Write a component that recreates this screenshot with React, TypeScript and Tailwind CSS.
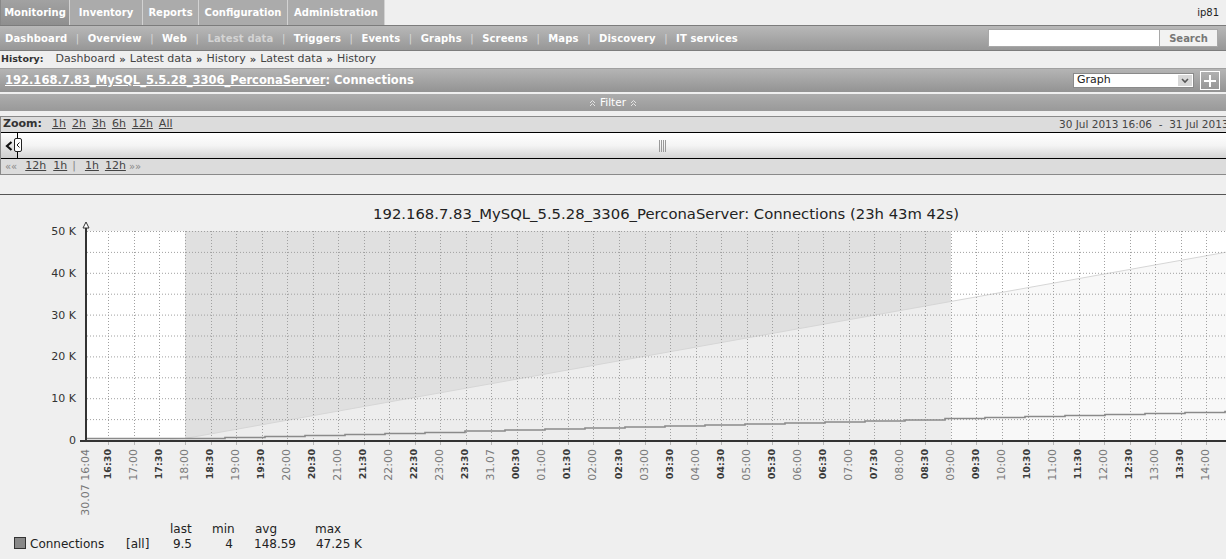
import React from "react";

const tabs = [
  { label: "Monitoring", w: "w-[70px]", active: true },
  { label: "Inventory", w: "w-[73px]" },
  { label: "Reports", w: "w-[56px]" },
  { label: "Configuration", w: "w-[89px]" },
  { label: "Administration", w: "w-[97px]" },
];

const navItems = [
  "Dashboard",
  "Overview",
  "Web",
  "Latest data",
  "Triggers",
  "Events",
  "Graphs",
  "Screens",
  "Maps",
  "Discovery",
  "IT services",
];

const crumbs = ["Dashboard", "Latest data", "History", "Latest data", "History"];

// graph geometry (page coordinates)
const X0 = 86.3;
const PPM = 0.851;
const Y_TOP = 231;
const Y_ZERO = 440;
const STEP = (Y_ZERO - Y_TOP) / 10;

const pad = (n: number) => (n < 10 ? "0" + n : "" + n);

const ticks: { x: number; label: string; major: boolean }[] = [];
for (let m = 26; X0 + m * PPM < 1240; m += 30) {
  const total = 16 * 60 + 4 + m;
  const h = Math.floor(total / 60) % 24;
  const mm = total % 60;
  ticks.push({
    x: X0 + m * PPM,
    label: h === 0 && mm === 0 ? "31.07" : `${pad(h)}:${pad(mm)}`,
    major: mm === 0,
  });
}

function avgPath() {
  let d = `M87 438.5 H185`;
  let y = 438.5;
  for (let x = 185; x < 1300; x += 40) {
    const ny = Math.round((438.5 - (x - 185) * 0.026) * 2) / 2;
    if (ny !== y) {
      d += ` V${ny}`;
      y = ny;
    }
    d += ` H${x + 40}`;
  }
  return d;
}

function DoubleUp() {
  return (
    <svg width="7" height="8" viewBox="0 0 7 8" className="inline-block">
      <path d="M1 4 L3.5 1.5 L6 4 M1 7 L3.5 4.5 L6 7" fill="none" stroke="#e4e4e4" strokeWidth="1" />
    </svg>
  );
}

function Graph() {
  return (
    <svg width="1226" height="364" className="block" style={{ fontFamily: "'DejaVu Sans', sans-serif" }}>
      <g transform="translate(0 -195)">
        <text x="666" y="219" textAnchor="middle" fontSize="14.8" fill="#222">
          192.168.7.83_MySQL_5.5.28_3306_PerconaServer: Connections (23h 43m 42s)
        </text>

        {/* plot background and non-working time */}
        <rect x="87" y={Y_TOP} width="1220" height={Y_ZERO - Y_TOP} fill="#ffffff" />
        <rect x="185" y={Y_TOP} width="766" height={Y_ZERO - Y_TOP} fill="#e0e0e0" />

        {/* max area */}
        <polygon points="87,439 170,439 185,438.5 1300,239 1300,440 87,440" fill="#f4f4f4" fillOpacity="0.65" />
        <polyline points="170,439 185,438.5 1300,239" fill="none" stroke="#d6d6d6" strokeWidth="1" />

        {/* grid */}
        {Array.from({ length: 10 }).map((_, k) => (
          <line
            key={"h" + k}
            x1="87"
            x2="1226"
            y1={Y_TOP + k * STEP + 0.5}
            y2={Y_TOP + k * STEP + 0.5}
            stroke="#a0a0a0"
            strokeWidth="1"
            strokeDasharray="1 2"
          />
        ))}
        {ticks.map((t) => (
          <line
            key={"v" + t.x}
            x1={Math.round(t.x) + 0.5}
            x2={Math.round(t.x) + 0.5}
            y1={Y_TOP}
            y2={Y_ZERO}
            stroke="#a0a0a0"
            strokeWidth="1"
            strokeDasharray="1 2"
          />
        ))}

        {/* avg line */}
        <path d={avgPath()} fill="none" stroke="#8a8a8a" strokeWidth="1.6" />

        {/* axes */}
        <line x1="86" x2="86" y1="224" y2="441" stroke="#333" strokeWidth="2" />
        <polygon points="83,228 89,228 86,222" fill="#fff" stroke="#333" strokeWidth="1" />
        <line x1="80" x2="1226" y1="441" y2="441" stroke="#333" strokeWidth="2" />
        {ticks.map((t) => (
          <line
            key={"t" + t.x}
            x1={Math.round(t.x) + 0.5}
            x2={Math.round(t.x) + 0.5}
            y1="442"
            y2="445"
            stroke="#b8b8b8"
            strokeWidth="1"
          />
        ))}

        {/* y labels */}
        {[0, 2, 4, 6, 8, 10].map((k) => (
          <text
            key={"y" + k}
            x="76"
            y={Y_TOP + k * STEP + 4}
            textAnchor="end"
            fontSize="11"
            fill="#333"
          >
            {k === 10 ? "0" : `${50 - k * 5} K`}
          </text>
        ))}

        {/* x labels */}
        <text
          transform={`translate(${X0} 449) rotate(-90)`}
          textAnchor="end"
          dominantBaseline="middle"
          fontSize="11"
          fill="#777"
        >
          30.07 16:04
        </text>
        {ticks.map((t) => (
          <text
            key={"l" + t.x}
            transform={`translate(${t.x} 449) rotate(-90)`}
            textAnchor="end"
            dominantBaseline="middle"
            fontSize={t.major ? 11 : 9.5}
            fontWeight={t.major ? 400 : 700}
            fill={t.major ? "#7a7a7a" : "#3a3a3a"}
          >
            {t.label}
          </text>
        ))}

        {/* legend */}
        <g fontSize="12" fill="#222">
          <text x="170" y="533">last</text>
          <text x="212" y="533">min</text>
          <text x="255" y="533">avg</text>
          <text x="315" y="533">max</text>
          <rect x="14.5" y="537.5" width="11" height="11" fill="#888" stroke="#333" />
          <text x="30" y="548">Connections</text>
          <text x="126" y="548">[all]</text>
          <text x="192" y="548" textAnchor="end">9.5</text>
          <text x="233" y="548" textAnchor="end">4</text>
          <text x="296" y="548" textAnchor="end">148.59</text>
          <text x="362" y="548" textAnchor="end">47.25 K</text>
        </g>
      </g>
    </svg>
  );
}

export default function App() {
  return (
    <div className="w-[1226px] h-[559px] overflow-hidden bg-[#efefef] text-[#333] font-['DejaVu_Sans',sans-serif]">
      {/* top tabs */}
      <div className="flex h-[26px] border-b border-[#7c7c7c] bg-[#efefef]">
        {tabs.map((t) => (
          <div
            key={t.label}
            className={`${t.w} flex items-center justify-center border-r border-[#d2d2d2] text-[10px] font-bold text-white ${
              t.active ? "bg-gradient-to-b from-[#a2a2a2] to-[#8f8f8f] border-l border-l-[#888]" : "bg-[#ababab]"
            }`}
          >
            {t.label}
          </div>
        ))}
        <div className="flex-1" />
        <div className="flex items-center pr-[7px] text-[10px] text-[#222]">ip81</div>
      </div>

      {/* nav row */}
      <div className="flex h-[25px] items-center border-b border-[#7c7c7c] bg-gradient-to-b from-[#b8b8b8] to-[#979797] pl-[5px] pr-[8px]">
        {navItems.map((n, i) => (
          <React.Fragment key={n + i}>
            {i > 0 && <span className="px-[8.5px] text-[10px] text-[#d8d8d8]">|</span>}
            <span
              className={`text-[10px] font-bold tracking-[0.15px] ${
                n === "Latest data" ? "text-[#d4d4d4]" : "text-white"
              }`}
            >
              {n}
            </span>
          </React.Fragment>
        ))}
        <div className="flex-1" />
        <div className="w-[172px] h-[18px] bg-white border border-[#a8a8a8]" />
        <button className="w-[58px] h-[18px] border border-l-0 border-[#a8a8a8] bg-[#f2f2f2] text-[10px] font-bold text-[#777]">
          Search
        </button>
      </div>

      {/* breadcrumbs */}
      <div className="flex h-[18px] items-center border-b border-[#a0a0a0] pl-[1px] text-[11px] text-[#444]">
        <span className="mr-[12px] text-[9.5px] font-bold text-[#333]">History:</span>
        {crumbs.map((c, i) => (
          <React.Fragment key={c + i}>
            {i > 0 && <span className="mx-[4px] text-[10px] font-bold">»</span>}
            <span>{c}</span>
          </React.Fragment>
        ))}
      </div>

      {/* title bar */}
      <div className="flex h-[23px] items-center bg-gradient-to-b from-[#b5b5b5] to-[#939393] pl-[5px] pr-[6px]">
        <span className="text-[11.5px] font-bold text-white">
          <span className="underline">192.168.7.83_MySQL_5.5.28_3306_PerconaServer</span>: Connections
        </span>
        <div className="flex-1" />
        <div className="flex h-[15px] w-[121px] items-center justify-between border border-[#8a8a8a] bg-white pl-[3px] pr-[1px] text-[11px] text-[#222]">
          <span>Graph</span>
          <span className="flex h-[11px] w-[14px] items-center justify-center bg-[#d8d8d8]">
            <svg width="8" height="6" viewBox="0 0 8 6">
              <path d="M1 1 L4 4 L7 1" fill="none" stroke="#555" strokeWidth="1.6" />
            </svg>
          </span>
        </div>
        <div className="ml-[6px] flex h-[19px] w-[20px] items-center justify-center border border-white">
          <svg width="14" height="14" viewBox="0 0 14 14">
            <path d="M7 1 V13 M1 7 H13" stroke="#fff" strokeWidth="2" />
          </svg>
        </div>
      </div>

      {/* filter bar */}
      <div className="mt-[2px] flex h-[17px] items-center justify-center gap-[4px] bg-gradient-to-b from-[#adadad] to-[#999999] text-[10.5px] text-white">
        <DoubleUp />
        <span>Filter</span>
        <DoubleUp />
      </div>

      {/* zoom box */}
      <div className="mt-[5px] border-y border-[#8a8a8a] border-l bg-[#dcdcdc]">
        <div className="flex h-[15px] items-center overflow-hidden text-[11px] text-[#444]">
          <div className="flex w-[1058px] shrink-0 items-center pl-[2px]">
            <span className="mr-[10px] font-bold text-[#333]">Zoom:</span>
            <div className="flex gap-[6px]">
              {["1h", "2h", "3h", "6h", "12h", "All"].map((z) => (
                <span key={z} className="underline">
                  {z}
                </span>
              ))}
            </div>
          </div>
          <span className="shrink-0 whitespace-nowrap text-[10.5px]">30 Jul 2013 16:06&nbsp; - &nbsp;31 Jul 2013 15:50</span>
        </div>

        {/* scrollbar */}
        <div className="relative flex h-[27px] overflow-hidden border-y border-black">
          <div className="flex w-[16px] shrink-0 items-center justify-center bg-gradient-to-b from-[#ffffff] to-[#cfcfcf]">
            <svg width="8" height="10" viewBox="0 0 8 10">
              <path d="M6.5 1 L2 5 L6.5 9" fill="none" stroke="#111" strokeWidth="2.2" />
            </svg>
          </div>
          <div className="flex w-[1290px] shrink-0 items-center justify-center border-l border-black bg-gradient-to-b from-[#ffffff] via-[#f4f4f4] to-[#d4d4d4]">
            <svg width="8" height="12" viewBox="0 0 8 12">
              <path d="M0.5 0 V12 M2.5 0 V12 M4.5 0 V12 M6.5 0 V12" stroke="#999" strokeWidth="1" />
            </svg>
          </div>
          <div className="absolute left-[13px] top-[5px] flex h-[14px] w-[8px] items-center justify-center rounded-[2px] border border-[#222] bg-white">
            <svg width="4" height="6" viewBox="0 0 4 6">
              <path d="M3.5 0.5 L1 3 L3.5 5.5" fill="none" stroke="#222" strokeWidth="1" />
            </svg>
          </div>
        </div>

        <div className="flex h-[15px] items-center pl-[4px] text-[11px] text-[#444]">
          <span className="mr-[8px] text-[10px] text-[#888]">««</span>
          <span className="mr-[7px] underline">12h</span>
          <span className="underline">1h</span>
          <span className="mx-[5px] text-[#888]">|</span>
          <span className="ml-[4px] mr-[6px] underline">1h</span>
          <span className="underline">12h</span>
          <span className="ml-[3px] text-[10px] text-[#888]">»»</span>
        </div>
      </div>

      <div className="h-[20px] border-b border-[#555]" />

      <Graph />
    </div>
  );
}
